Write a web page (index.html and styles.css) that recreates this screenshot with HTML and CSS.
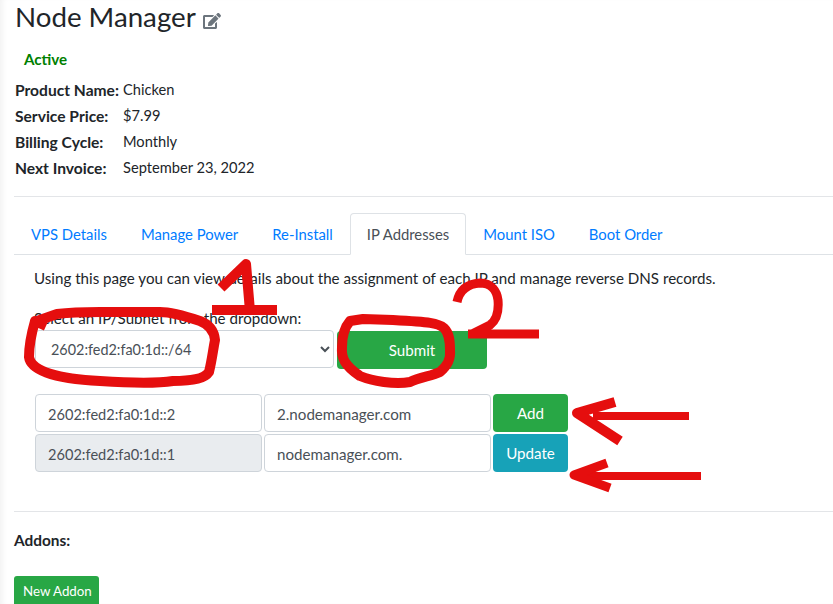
FILE: index.html
```html
<!DOCTYPE html>
<html lang="en">
<head>
<meta charset="utf-8">
<title>Node Manager</title>
<link rel="stylesheet" href="styles.css">
</head>
<body>
<div class="page">
  <h1 class="title">Node Manager
    <svg class="edit-icon" viewBox="0 0 576 512"><path d="M402.6 83.2l90.2 90.2c3.8 3.8 3.8 10 0 13.8L274.4 405.6l-92.8 10.3c-12.4 1.4-22.9-9.1-21.5-21.5l10.3-92.8L388.8 83.2c3.8-3.8 10-3.8 13.8 0zm162-22.9l-48.8-48.8c-15.2-15.2-39.9-15.2-55.2 0l-35.4 35.4c-3.8 3.8-3.8 10 0 13.8l90.2 90.2c3.8 3.8 10 3.8 13.8 0l35.4-35.4c15.2-15.3 15.2-40 0-55.2zM384 346.2V448H64V128h229.8c3.2 0 6.2-1.3 8.5-3.5l40-40c7.6-7.6 2.2-20.5-8.5-20.5H48C21.5 64 0 85.5 0 112v352c0 26.5 21.5 48 48 48h352c26.5 0 48-21.5 48-48V306.2c0-10.7-12.9-16-20.5-8.5l-40 40c-2.2 2.3-3.5 5.3-3.5 8.5z"/></svg>
  </h1>
  <div class="status">Active</div>
  <dl class="info">
    <dt>Product Name:</dt><dd>Chicken</dd>
    <dt>Service Price:</dt><dd>$7.99</dd>
    <dt>Billing Cycle:</dt><dd>Monthly</dd>
    <dt>Next Invoice:</dt><dd>September 23, 2022</dd>
  </dl>
  <hr class="rule rule-top">
  <ul class="tabs">
    <li><a class="tab">VPS Details</a></li>
    <li><a class="tab">Manage Power</a></li>
    <li><a class="tab">Re-Install</a></li>
    <li><a class="tab active">IP Addresses</a></li>
    <li><a class="tab">Mount ISO</a></li>
    <li><a class="tab">Boot Order</a></li>
  </ul>
  <div class="panel">
    <p class="intro">Using this page you can view details about the assignment of each IP and manage reverse DNS records.</p>
    <label class="select-label" for="subnet">Select an IP/Subnet from the dropdown:</label>
    <div class="select-row">
      <select id="subnet" class="control select"><option>2602:fed2:fa0:1d::/64</option></select>
      <button class="btn green submit">Submit</button>
    </div>
    <div class="ip-row">
      <input class="control ip" value="2602:fed2:fa0:1d::2">
      <input class="control" value="2.nodemanager.com">
      <button class="btn green">Add</button>
    </div>
    <div class="ip-row">
      <input class="control ip" value="2602:fed2:fa0:1d::1" disabled>
      <input class="control" value="nodemanager.com.">
      <button class="btn teal">Update</button>
    </div>
  </div>
  <hr class="rule rule-bottom">
  <div class="addons-title">Addons:</div>
  <button class="btn green small">New Addon</button>
</div>
<svg class="marks" viewBox="0 0 833 604" fill="none" stroke="#e50e0e" stroke-width="8" stroke-linejoin="round">
  <path class="thick" d="M221 288L246 264L250 311M212 310H277"/>
  <path class="thick" d="M46 326L35 321C31 335 29 345 29 357C31 372 60 379 100 381C130 383 160 383 173 381C195 381 205 378 209 372C212 360 213 350 215 340C214 330 208 324 200 321C185 316 170 312 160 312H100C80 312 65 313 57 314L37 321"/>
  <path class="mid" d="M457 302C459 292 465 284 480 283C492 283 497 292 498 300C499 312 497 320 490 325L472 334M468 334H539"/>
  <path class="thick" d="M363 319L350 321C344 328 342 337 342 347C341 358 345 366 360 376C372 381 395 385 410 382C420 377 432 376 440 372C447 366 451 360 450 350C450 340 449 333 444 328C438 323 430 322 393 320Z"/>
  <path d="M689 416H593"/>
  <path class="thick" d="M615 402L577 413L620 441"/>
  <path d="M701 476H587"/>
  <path class="mid" d="M607 463L574 475L610 488"/>
</svg>
</body>
</html>
```
FILE: styles.css
```css
* { box-sizing: border-box; }
html, body { margin: 0; padding: 0; }
body {
  position: relative;
  height: 604px;
  overflow: hidden;
  background: #fff;
  color: #212529;
  font-family: "Lato", "Noto Sans", sans-serif;
  font-size: 15.15px;
  line-height: 24px;
}
.page {
  height: 604px;
  padding-left: 14px;
  overflow: hidden;
  box-shadow: inset 6px 0 6px -4px #f0f0f0;
}
.title {
  margin: 0;
  padding-left: 1px;
  font-size: 27.7px;
  line-height: 34px;
  font-weight: 400;
  display: flex;
  align-items: center;
  gap: 7px;
  height: 34px;
}
.edit-icon { width: 18px; height: 16px; fill: #6c757d; margin-top: 8px; }
.status {
  margin: 13px 0 0 10px;
  color: #008000;
  font-weight: 700;
}
.info {
  margin: 6px 0 0 1px;
  display: grid;
  grid-template-columns: 108px 1fr;
  grid-auto-rows: 26px;
  align-items: center;
}
.info dt { font-weight: 700; font-size: 15.6px; white-space: nowrap; }
.info dd { margin: 0; font-size: 14.65px; }
.rule { margin: 0; border: 0; border-top: 1px solid #e3e5e8; }
.rule-top { margin-top: 15px; }
.tabs {
  list-style: none;
  margin: 16px 0 0;
  padding: 0;
  display: flex;
  border-bottom: 1px solid #dee2e6;
  height: 42px;
  font-size: 14.83px;
}
.tab {
  display: block;
  height: 42px;
  padding: 8px 16px;
  border: 1px solid transparent;
  border-radius: 4px 4px 0 0;
  color: #007bff;
}
.tab.active {
  color: #495057;
  background: #fff;
  border-color: #dee2e6 #dee2e6 #fff;
}
.panel { padding-left: 21px; }
.intro { margin: 11px 0 0 -1px; }
.select-label { display: block; margin: 16px 0 0 -1px; height: 24px; }
.select-row { display: flex; gap: 3px; margin-top: 0; }
.control {
  height: 38px;
  border: 1px solid #ced4da;
  border-radius: 4px;
  padding: 7px 12px 5px;
  font: inherit;
  color: #495057;
  background: #fff;
  min-width: 0;
}
.control:disabled { background: #e9ecef; opacity: 1; }
.control.ip { font-size: 14.6px; }
.select { width: 299px; padding: 6px 12px 6px 11px; font-size: 14.4px; }
.btn {
  height: 38px;
  border: 1px solid transparent;
  border-radius: 4px;
  padding: 6px 12px;
  font: inherit;
  color: #fff;
}
.green { background: #28a745; }
.teal { background: #17a2b8; }
.submit { width: 150px; margin-top: 1px; }
.ip-row {
  display: grid;
  grid-template-columns: 227px 227px 75px;
  gap: 2px;
  margin-top: 2px;
}
.select-row + .ip-row { margin-top: 25px; }
.rule-bottom { margin-top: 39px; }
.addons-title { margin-top: 16px; font-weight: 700; font-size: 15.4px; }
.small {
  display: block;
  margin-top: 24px;
  height: 31px;
  padding: 4px 8px;
  font-size: 13.3px;
  line-height: 21px;
  border-radius: 3px;
  width: 85px;
  white-space: nowrap;
}
.marks {
  position: absolute;
  left: 0;
  top: 0;
  width: 833px;
  height: 604px;
  pointer-events: none;
}
.thick { stroke-width: 10; }
.mid { stroke-width: 9; }
```
